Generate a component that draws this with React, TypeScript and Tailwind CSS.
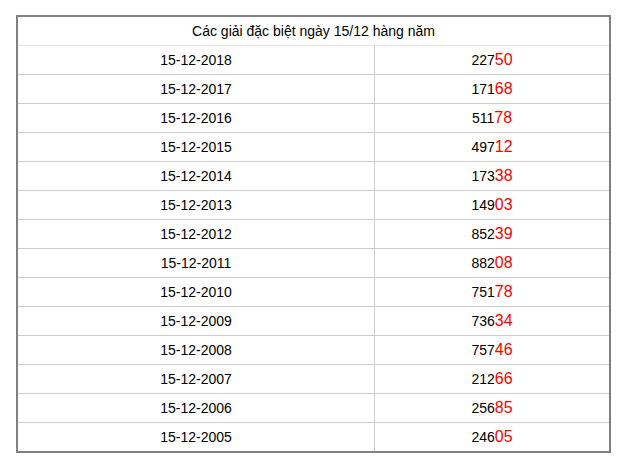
const rows = [
  ['15-12-2018', '22750'],
  ['15-12-2017', '17168'],
  ['15-12-2016', '51178'],
  ['15-12-2015', '49712'],
  ['15-12-2014', '17338'],
  ['15-12-2013', '14903'],
  ['15-12-2012', '85239'],
  ['15-12-2011', '88208'],
  ['15-12-2010', '75178'],
  ['15-12-2009', '73634'],
  ['15-12-2008', '75746'],
  ['15-12-2007', '21266'],
  ['15-12-2006', '25685'],
  ['15-12-2005', '24605'],
];

export default function App() {
  return (
    <div
      className="min-h-[467px] bg-white pl-4 pt-[15px] text-[14px] text-black"
      style={{ fontFamily: '"Liberation Sans", Arial, sans-serif' }}
    >
      <div className="w-[595px] border-2 border-[#808080]">
        {/* Header */}
        <div className="flex h-[29px] items-center justify-center border-b border-[#e6e6e6]">
          Các giải đặc biệt ngày 15/12 hàng năm
        </div>

        {/* Rows */}
        {rows.map(([date, num], i) => (
          <div
            key={date}
            className={i > 0 ? 'flex h-[29px] border-t border-[#cccccc]' : 'flex h-[28px]'}
          >
            <div className="flex w-[357px] items-center justify-center border-r border-[#cccccc]">
              {date}
            </div>
            <div className="flex flex-1 items-center justify-center">
              <span className="leading-none">
                {num.slice(0, 3)}
                <span className="text-[16px] text-[#ff0000]">{num.slice(3)}</span>
              </span>
            </div>
          </div>
        ))}
      </div>
    </div>
  );
}
